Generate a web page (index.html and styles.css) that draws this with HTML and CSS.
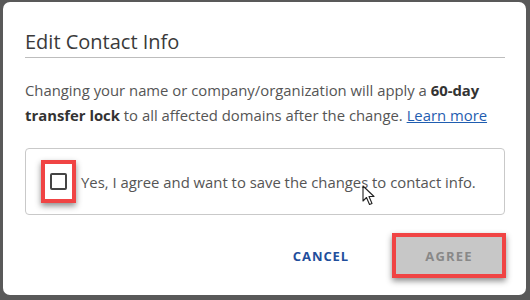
FILE: index.html
```html
<!DOCTYPE html>
<html lang="en">
<head>
  <meta charset="UTF-8">
  <meta name="viewport" content="width=device-width, initial-scale=1.0">
  <title>Edit Contact Info</title>
  <link rel="stylesheet" href="styles.css">
</head>
<body>
  <!-- Dialog -->
  <div class="dialog">
    <h2 class="dialog-title">Edit Contact Info</h2>
    <p class="dialog-text">
      Changing your name or company/organization will apply a <b>60-day transfer lock</b> to all affected domains after the change. <a href="#">Learn more</a>
    </p>

    <label class="agree-box">
      <span class="mark">
        <input type="checkbox" class="check">
      </span>
      <span class="agree-text">Yes, I agree and want to save the changes to contact info.</span>
      <svg class="cursor" width="14" height="21" viewBox="0 0 14 21">
        <path d="M1 1 L1 16 L4.5 12.5 L7.5 19.5 L10 18.5 L7 11.5 L12 11.5 Z" fill="#fff" stroke="#222" stroke-width="1.1" stroke-linejoin="round"/>
      </svg>
    </label>

    <div class="actions">
      <button class="btn-cancel">CANCEL</button>
      <span class="mark mark-btn">
        <button class="btn-agree" disabled>AGREE</button>
      </span>
    </div>
  </div>
</body>
</html>
```

FILE: styles.css
```css
/* Base */
* { box-sizing: border-box; margin: 0; padding: 0; }
body { font-family: 'Open Sans', 'Noto Sans', sans-serif; background: #595959; color: #555; }
a { color: #1f5db0; text-decoration: underline; }

/* Dialog */
.dialog {
  width: 523px;
  margin: 2px 0 0 3px;
  padding: 26px 21px 17px 22px;
  background: #fff;
  border-radius: 7px;
}
.dialog-title {
  font-size: 20px;
  font-weight: 400;
  line-height: 27px;
  color: #3a3a3a;
  padding-bottom: 2px;
  border-bottom: 1px solid #bdbdbd;
}
.dialog-text {
  margin-top: 20px;
  font-size: 14.85px;
  line-height: 25px;
}
.dialog-text b { color: #333; font-weight: 700; }

/* Agreement box */
.agree-box {
  position: relative;
  display: flex;
  align-items: center;
  margin-top: 20px;
  padding: 11px 15px;
  border: 1px solid #c9c9c9;
  border-radius: 4px;
  font-size: 14.85px;
}
.mark {
  display: flex;
  border: 4px solid #f04444;
  box-shadow: 0 3px 6px rgba(0,0,0,0.45);
}
.agree-box .mark { padding: 9px 5px; }
.check {
  appearance: none;
  width: 17px;
  height: 17px;
  border: 2px solid #444;
  border-radius: 2px;
  background: #fff;
}
.agree-text { margin-left: 5px; color: #555; }
.cursor { position: absolute; left: 336px; top: 36px; }

/* Buttons */
.actions {
  display: flex;
  justify-content: flex-end;
  align-items: center;
  margin-top: 18px;
  margin-right: -1px;
}
.btn-cancel {
  background: none;
  border: none;
  font-family: inherit;
  font-size: 13px;
  font-weight: 700;
  letter-spacing: 0.9px;
  color: #1f4e9c;
  padding: 10px 0;
  margin-right: 43px;
  cursor: pointer;
}
.btn-agree {
  width: 106px;
  height: 37px;
  background: #c7c7c7;
  border: none;
  font-family: inherit;
  font-size: 13px;
  font-weight: 700;
  letter-spacing: 1.2px;
  color: #888;
}
```
